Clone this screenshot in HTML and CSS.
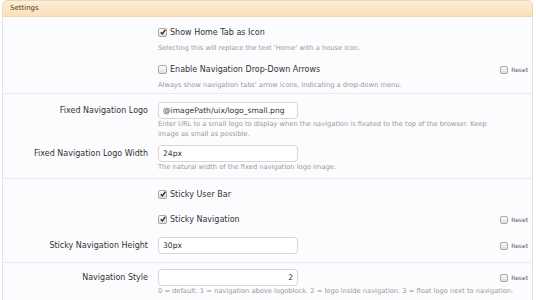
FILE: index.html
```html
<!DOCTYPE html>
<html lang="en">
<head>
    <meta charset="UTF-8">
    <title>Settings</title>
    <link rel="stylesheet" href="styles.css">
</head>
<body>
    <div class="panel">
        <h3 class="panel-head">Settings</h3>
        <div class="panel-body">

            <div class="group g1">
                <div class="row">
                    <div class="label"></div>
                    <div class="ctrl">
                        <div class="line">
                            <label class="check"><span class="box checked"><svg viewBox="0 0 10 10"><path d="M2.2 5.2 L4.2 7.4 L8 2.2"/></svg></span>Show Home Tab as Icon</label>
                        </div>
                        <p class="hint">Selecting this will replace the text 'Home' with a house icon.</p>
                    </div>
                </div>
                <div class="row">
                    <div class="label"></div>
                    <div class="ctrl">
                        <div class="line">
                            <label class="check"><span class="box"></span>Enable Navigation Drop-Down Arrows</label>
                            <label class="reset"><span class="box small"></span>Reset</label>
                        </div>
                        <p class="hint">Always show navigation tabs' arrow icons, indicating a drop-down menu.</p>
                    </div>
                </div>
            </div>

            <div class="group g2">
                <div class="row">
                    <div class="label">Fixed Navigation Logo</div>
                    <div class="ctrl">
                        <div class="line">
                            <input class="text" type="text" value="@imagePath/uix/logo_small.png">
                        </div>
                        <p class="hint narrow">Enter URL to a small logo to display when the navigation is fixated to the top of the browser. Keep image as small as possible.</p>
                    </div>
                </div>
                <div class="row">
                    <div class="label">Fixed Navigation Logo Width</div>
                    <div class="ctrl">
                        <div class="line">
                            <input class="text" type="text" value="24px">
                        </div>
                        <p class="hint">The natural width of the fixed navigation logo image.</p>
                    </div>
                </div>
            </div>

            <div class="group g3">
                <div class="row">
                    <div class="label"></div>
                    <div class="ctrl">
                        <div class="line">
                            <label class="check"><span class="box checked"><svg viewBox="0 0 10 10"><path d="M2.2 5.2 L4.2 7.4 L8 2.2"/></svg></span>Sticky User Bar</label>
                        </div>
                    </div>
                </div>
                <div class="row">
                    <div class="label"></div>
                    <div class="ctrl">
                        <div class="line">
                            <label class="check"><span class="box checked"><svg viewBox="0 0 10 10"><path d="M2.2 5.2 L4.2 7.4 L8 2.2"/></svg></span>Sticky Navigation</label>
                            <label class="reset"><span class="box small"></span>Reset</label>
                        </div>
                    </div>
                </div>
                <div class="row spaced">
                    <div class="label">Sticky Navigation Height</div>
                    <div class="ctrl">
                        <div class="line">
                            <input class="text" type="text" value="30px">
                            <label class="reset"><span class="box small"></span>Reset</label>
                        </div>
                    </div>
                </div>
            </div>

            <div class="group g4">
                <div class="row">
                    <div class="label">Navigation Style</div>
                    <div class="ctrl">
                        <div class="line">
                            <input class="text num" type="text" value="2">
                            <label class="reset"><span class="box small"></span>Reset</label>
                        </div>
                        <p class="hint">0 = default. 1 = navigation above logoblock. 2 = logo inside navigation. 3 = float logo next to navigation.</p>
                    </div>
                </div>
            </div>

        </div>
    </div>
</body>
</html>
```

FILE: styles.css
```css
body {
    margin: 0;
    font-family: "DejaVu Sans", Tahoma, sans-serif;
    background-color: #ffffff;
    color: #333333;
}
.panel {
    margin: 0 3px 0 2px;
}
.panel-head {
    margin: 0;
    height: 17px;
    box-sizing: border-box;
    padding-left: 7px;
    border: 1px solid #efd7b5;
    border-radius: 5px 5px 0 0;
    background: linear-gradient(#fdeedb, #fbdfb8);
    font-size: 7px;
    font-weight: normal;
    line-height: 15px;
    color: #4f3c22;
}
.panel-body {
    border: 1px solid #d9e6ef;
    border-top: 0;
    background-color: #fcfcfe;
}
.group {
    padding: 7px 0 6px;
    border-bottom: 1px solid #e4edf4;
}
.g1 {
    padding-bottom: 3px;
}
.g2 {
    padding-top: 8px;
}
.g3 {
    padding-bottom: 8px;
}
.g4 {
    border-bottom: 0;
    padding-top: 6px;
}
.row {
    display: grid;
    grid-template-columns: 145px 1fr;
    column-gap: 10px;
}
.row + .row {
    margin-top: 6px;
}
.g1 .row + .row,
.g3 .row + .row {
    margin-top: 8px;
}
.g3 .row.spaced {
    margin-top: 9px;
}
.label {
    text-align: right;
    font-size: 8px;
    line-height: 17px;
    color: #333333;
}
.line {
    display: flex;
    align-items: center;
    justify-content: space-between;
    height: 17px;
    padding-right: 4px;
}
.check {
    display: flex;
    align-items: center;
    gap: 3px;
    font-size: 8px;
    color: #333333;
}
.box {
    display: inline-block;
    width: 9px;
    height: 9px;
    box-sizing: border-box;
    border: 1px solid #a9a9a9;
    border-radius: 2px;
    background: linear-gradient(#ffffff, #dcdcdc);
    position: relative;
}
.box svg {
    position: absolute;
    left: 0;
    top: -1px;
    width: 8px;
    height: 8px;
}
.box svg path {
    fill: none;
    stroke: #333333;
    stroke-width: 1.8;
}
.box.small {
    width: 8px;
    height: 8px;
}
.hint {
    max-width: 356px;
    margin: 0;
    font-size: 6.7px;
    line-height: 10px;
    color: #9a9a9a;
}
.hint.narrow {
    max-width: 340px;
}
.g1 .line + .hint {
    margin-top: 2px;
}
.text {
    display: block;
    width: 140px;
    height: 17px;
    box-sizing: border-box;
    margin: 0;
    padding: 0 4px;
    border: 1px solid #d6d6d6;
    border-radius: 4px;
    background-color: #ffffff;
    font-family: inherit;
    font-size: 7.6px;
    color: #333333;
}
.text.num {
    text-align: right;
}
.reset {
    display: flex;
    align-items: center;
    gap: 3px;
    font-size: 6px;
    color: #555555;
}
```
